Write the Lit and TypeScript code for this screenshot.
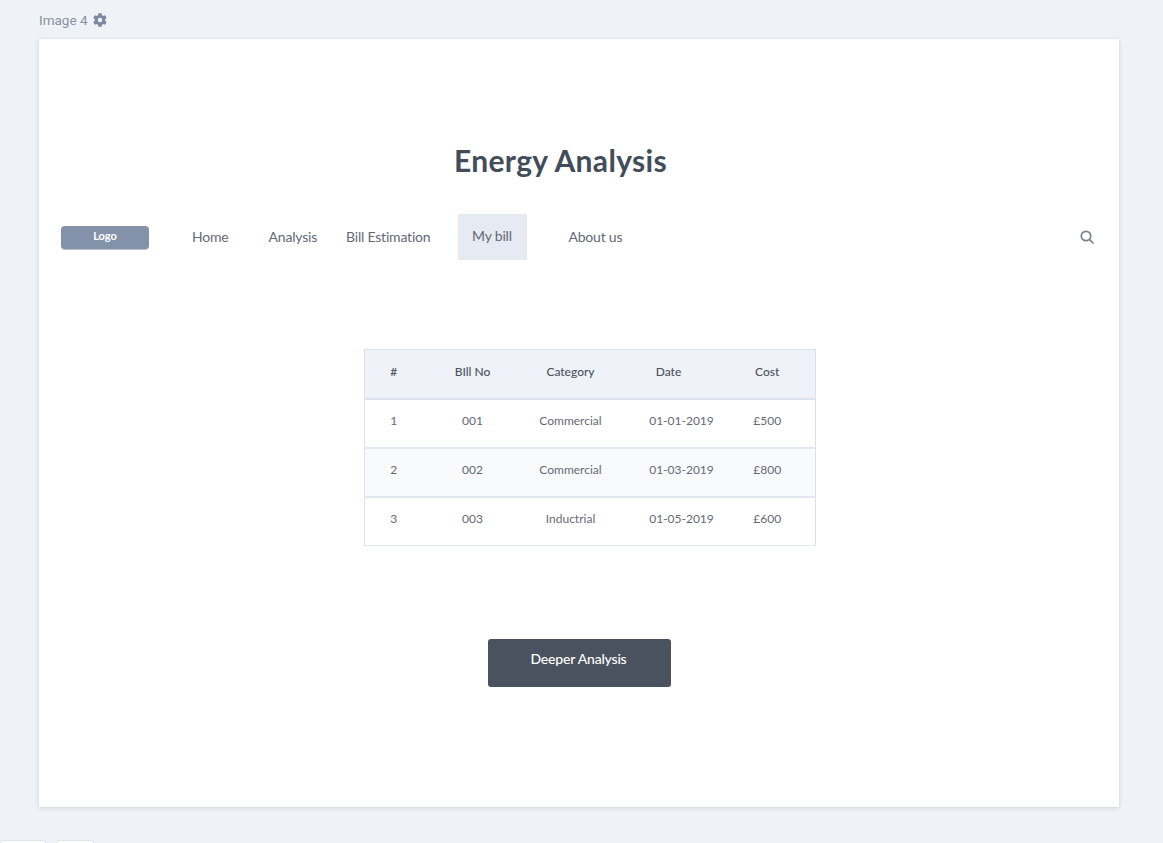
import { LitElement, html, css } from "lit";
import { customElement } from "lit/decorators.js";

const rows = [
  ["1", "001", "Commercial", "01-01-2019", "£500"],
  ["2", "002", "Commercial", "01-03-2019", "£800"],
  ["3", "003", "Inductrial", "01-05-2019", "£600"],
];

@customElement("app-root")
export class AppRoot extends LitElement {
  static styles = css`
    :host {
      display: block;
      height: 843px;
      overflow: hidden;
      background: #eff2f7;
      font-family: Lato, "Liberation Sans", sans-serif;
      color: #474f5e;
    }
    .label {
      display: flex;
      align-items: center;
      gap: 5px;
      height: 39px;
      padding: 0 0 0 39px;
      box-sizing: border-box;
      font-family: Roboto, "Liberation Sans", sans-serif;
      font-size: 13.5px;
      color: #8791a3;
    }
    .card {
      width: 1080px;
      height: 768px;
      margin-left: 39px;
      background: #fff;
      box-shadow: 0 1px 4px rgba(70, 85, 120, 0.22);
      display: flex;
      flex-direction: column;
    }
    h1 {
      margin: 103px 0 0;
      width: 1043px;
      text-align: center;
      font-size: 30px;
      line-height: 36px;
      font-weight: 700;
      letter-spacing: 0.35px;
      color: #434d5a;
    }
    nav {
      display: flex;
      align-items: center;
      margin-top: 36px;
      height: 46px;
      padding: 0 25px 0 22px;
      font-size: 14px;
      letter-spacing: -0.2px;
      color: #626976;
    }
    .logo {
      width: 88px;
      height: 23px;
      box-sizing: border-box;
      padding-bottom: 3px;
      background: #8492a9;
      border-radius: 4px;
      box-shadow: 0 1px 0 #b4bfce;
      color: #fff;
      font-size: 11px;
      font-weight: 700;
      letter-spacing: 0;
      display: flex;
      align-items: center;
      justify-content: center;
      margin-right: 43px;
    }
    .item { display: block; white-space: nowrap; padding-bottom: 1px; }
    .home { margin-right: 40px; }
    .analysis { margin-right: 29px; }
    .estimation { margin-right: 28px; }
    .active {
      width: 69px;
      height: 46px;
      margin-right: 41px;
      background: #e6eaf3;
      display: flex;
      align-items: center;
      justify-content: center;
      padding: 0 2px 3px 0;
      box-sizing: border-box;
    }
    .search { margin-left: auto; display: block; margin-top: -1px; }
    .tablewrap {
      margin: 89px 0 0 325px;
      width: 451px;
    }
    table {
      width: 451px;
      table-layout: fixed;
      border-collapse: collapse;
      font-size: 12px;
      color: #636a77;
      text-align: center;
      border-left: 1px solid #dbe1ec;
      border-right: 1px solid #dbe1ec;
      border-bottom: 1px solid #e4e8f0;
    }
    th {
      height: 49px;
      padding: 0 0 4px;
      box-sizing: border-box;
      background: #eff2f8;
      font-weight: 500;
      color: #4a5361;
      border-top: 1px solid #dbe1ec;
      border-bottom: 2px solid #dce2ee;
    }
    td {
      height: 49px;
      padding: 0 0 5px;
      box-sizing: border-box;
      border-bottom: 2px solid #e2e7f1;
    }
    tbody tr:last-child td { border-bottom: 0; }
    tr.alt td { background: #f8fafc; }
    th.date { padding-right: 26px; }
    .cost { padding-right: 25px; }
    .btn {
      margin: 93px 0 0 449px;
      width: 183px;
      height: 48px;
      box-sizing: border-box;
      padding: 0 2px 10px 0;
      border: 0;
      border-radius: 3px;
      background: #4a5260;
      color: #fff;
      font: 500 14px Lato, "Liberation Sans", sans-serif;
      letter-spacing: -0.2px;
    }
    .tabs {
      display: flex;
      gap: 10px;
      margin-top: 33px;
    }
    .tabs span {
      height: 4px;
      background: #fff;
      border: 1px solid #dfe3ea;
      box-sizing: border-box;
      border-radius: 3px 3px 0 0;
    }
    .tabs span:first-child { width: 46px; }
    .tabs span:last-child { width: 38px; }
  `;

  render() {
    return html`
      <div class="label">
        <span>Image 4</span>
        <svg width="14" height="14" viewBox="0 0 512 512" fill="#7d89a0">
          <path d="M487 316l-43-25a195 195 0 0 0 0-70l43-25c5-3 7-9 6-14a252 252 0 0 0-56-96c-4-4-10-5-15-3l-43 25a191 191 0 0 0-61-35V23c0-6-4-10-9-12a254 254 0 0 0-111 0c-6 1-10 6-10 12v50a197 197 0 0 0-60 35L85 83c-5-3-11-2-15 3a250 250 0 0 0-56 96c-2 6 0 11 6 14l43 25a195 195 0 0 0 0 70l-43 25c-5 3-7 9-6 14a252 252 0 0 0 56 96c4 4 10 5 15 3l43-25a191 191 0 0 0 61 35v50c0 6 4 10 9 12a254 254 0 0 0 111 0c6-1 10-6 10-12v-50a197 197 0 0 0 60-35l44 25c5 3 11 2 15-3a250 250 0 0 0 56-96c1-6-1-11-7-14zM256 336a80 80 0 1 1 0-160 80 80 0 0 1 0 160z"/>
        </svg>
      </div>
      <div class="card">
        <h1>Energy Analysis</h1>
        <nav>
          <div class="logo">Logo</div>
          <span class="item home">Home</span>
          <span class="item analysis">Analysis</span>
          <span class="item estimation">Bill Estimation</span>
          <span class="item active">My bill</span>
          <span class="item">About us</span>
          <svg class="search" width="14" height="14" viewBox="0 0 14 14" fill="none" stroke="#7b818c" stroke-width="1.7">
            <circle cx="6" cy="6" r="4.7"/>
            <path d="M9.5 9.5L13 13" stroke-linecap="round"/>
          </svg>
        </nav>
        <div class="tablewrap">
          <table>
            <colgroup>
              <col style="width:58px" /><col style="width:100px" /><col style="width:96px" /><col style="width:126px" /><col style="width:71px" />
            </colgroup>
            <thead>
              <tr>
                <th>#</th><th>BIll No</th><th>Category</th><th class="date">Date</th><th class="cost">Cost</th>
              </tr>
            </thead>
            <tbody>
              ${rows.map(
                (r, i) => html`<tr class=${i === 1 ? "alt" : ""}>
                  <td>${r[0]}</td><td>${r[1]}</td><td>${r[2]}</td><td>${r[3]}</td><td class="cost">${r[4]}</td>
                </tr>`
              )}
            </tbody>
          </table>
        </div>
        <button class="btn">Deeper Analysis</button>
      </div>
      <div class="tabs"><span></span><span></span></div>
    `;
  }
}
